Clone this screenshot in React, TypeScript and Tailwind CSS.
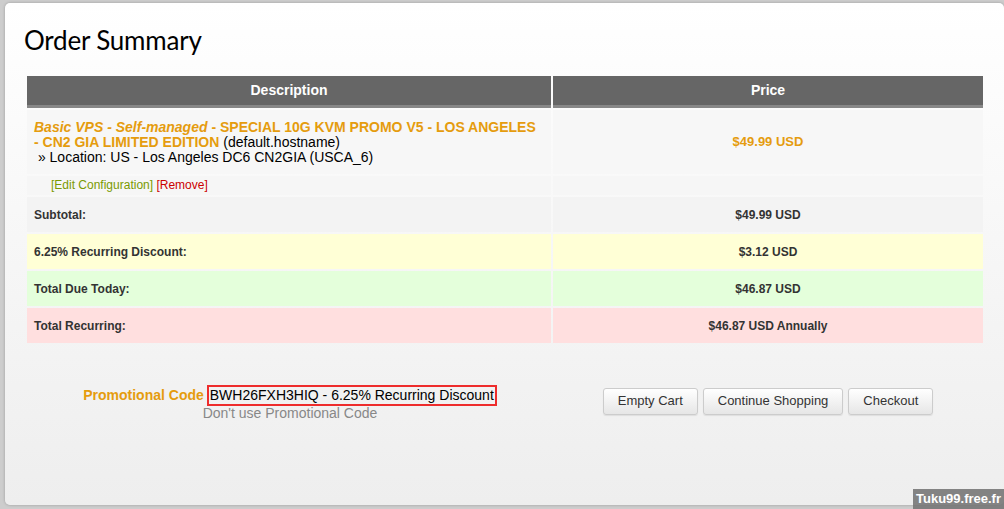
import React from "react";

const orange = "text-[#e59c0e]";

export default function App() {
  return (
    <div className="relative w-[1004px] h-[509px] overflow-hidden bg-[#cdcdcd] pl-[5px] pt-[3px] font-['Liberation_Sans',Arial,sans-serif]">
      <div className="w-[999px] h-[502px] rounded-[5px] bg-linear-to-b from-white to-[#eeeeee] shadow-[0_0_3px_rgba(0,0,0,0.25)]">
        <h1 className="pl-[19px] pt-[20px] h-[73px] text-[26px] leading-[34px] text-black font-['Lato',sans-serif] tracking-[-0.2px]">
          Order Summary
        </h1>

        <div className="ml-[22px] w-[956px] grid grid-cols-[524px_430px] gap-x-[2px] gap-y-[2px]">
          {/* header */}
          <div className="h-[32px] bg-[#666666] border-b-[3px] border-[#888888] flex items-center justify-center text-white font-bold text-[14px]">
            Description
          </div>
          <div className="h-[32px] bg-[#666666] border-b-[3px] border-[#888888] flex items-center justify-center text-white font-bold text-[14px]">
            Price
          </div>

          {/* product */}
          <div className="h-[64px] bg-[#f7f7f7] px-[7px] pt-[10px] text-[14px] leading-[15px] text-black">
            <div>
              <span className={`${orange} font-bold italic`}>Basic VPS - Self-managed</span>
              <span className={`${orange} font-bold`}> - SPECIAL 10G KVM PROMO V5 - LOS ANGELES - CN2 GIA LIMITED EDITION</span>{" "}
              (default.hostname)
            </div>
            <div>&nbsp;» Location: US - Los Angeles DC6 CN2GIA (USCA_6)</div>
          </div>
          <div className={`h-[64px] bg-[#f7f7f7] flex items-center justify-center font-bold text-[13px] ${orange}`}>
            $49.99 USD
          </div>

          {/* actions */}
          <div className="h-[19px] bg-[#f6f6f6] pl-[24px] text-[12px] leading-[19px]">
            <span className="text-[#7a9a01]">[Edit Configuration]</span>{" "}
            <span className="text-[#cc0000]">[Remove]</span>
          </div>
          <div className="h-[19px] bg-[#f6f6f6]" />

          {/* totals */}
          <div className="h-[35px] bg-[#f3f3f3] flex items-center pl-[7px] text-[12px] font-bold text-[#333]">Subtotal:</div>
          <div className="h-[35px] bg-[#f3f3f3] flex items-center justify-center text-[12px] font-bold text-[#333]">$49.99 USD</div>

          <div className="h-[35px] bg-[#ffffd6] flex items-center pl-[7px] text-[12px] font-bold text-[#333]">6.25% Recurring Discount:</div>
          <div className="h-[35px] bg-[#ffffd6] flex items-center justify-center text-[12px] font-bold text-[#333]">$3.12 USD</div>

          <div className="h-[35px] bg-[#e4ffdb] flex items-center pl-[7px] text-[12px] font-bold text-[#333]">Total Due Today:</div>
          <div className="h-[35px] bg-[#e4ffdb] flex items-center justify-center text-[12px] font-bold text-[#333]">$46.87 USD</div>

          <div className="h-[35px] bg-[#ffdfdf] flex items-center pl-[7px] text-[12px] font-bold text-[#333]">Total Recurring:</div>
          <div className="h-[35px] bg-[#ffdfdf] flex items-center justify-center text-[12px] font-bold text-[#333]">$46.87 USD Annually</div>
        </div>

        {/* promo + buttons */}
        <div className="ml-[22px] w-[956px] mt-[42px] grid grid-cols-[526px_430px] items-center">
          <div className="flex flex-col items-center text-[14px] leading-[15px]">
            <div className="flex items-center">
              <span className={`${orange} font-bold mr-[3px]`}>Promotional Code</span>
              <span className="border-2 border-[#ee2c2c] px-[1px] leading-[17px] text-black">BWH26FXH3HIQ - 6.25% Recurring Discount</span>
            </div>
            <div className="text-[#888888]">Don't use Promotional Code</div>
          </div>
          <div className="flex justify-center gap-[5px] pb-[4px]">
            {["Empty Cart", "Continue Shopping", "Checkout"].map((b) => (
              <button
                key={b}
                className="h-[27px] px-[14px] rounded-[3px] border border-[#cccccc] bg-linear-to-b from-white to-[#e6e6e6] text-[13px] text-[#333] shadow-[0_1px_1px_rgba(0,0,0,0.08)]"
              >
                {b}
              </button>
            ))}
          </div>
        </div>
      </div>

      <div className="absolute right-0 bottom-0 h-[20px] px-[3px] bg-[#777777]/90 text-white font-bold text-[13px] leading-[20px]">
        Tuku99.free.fr
      </div>
    </div>
  );
}
